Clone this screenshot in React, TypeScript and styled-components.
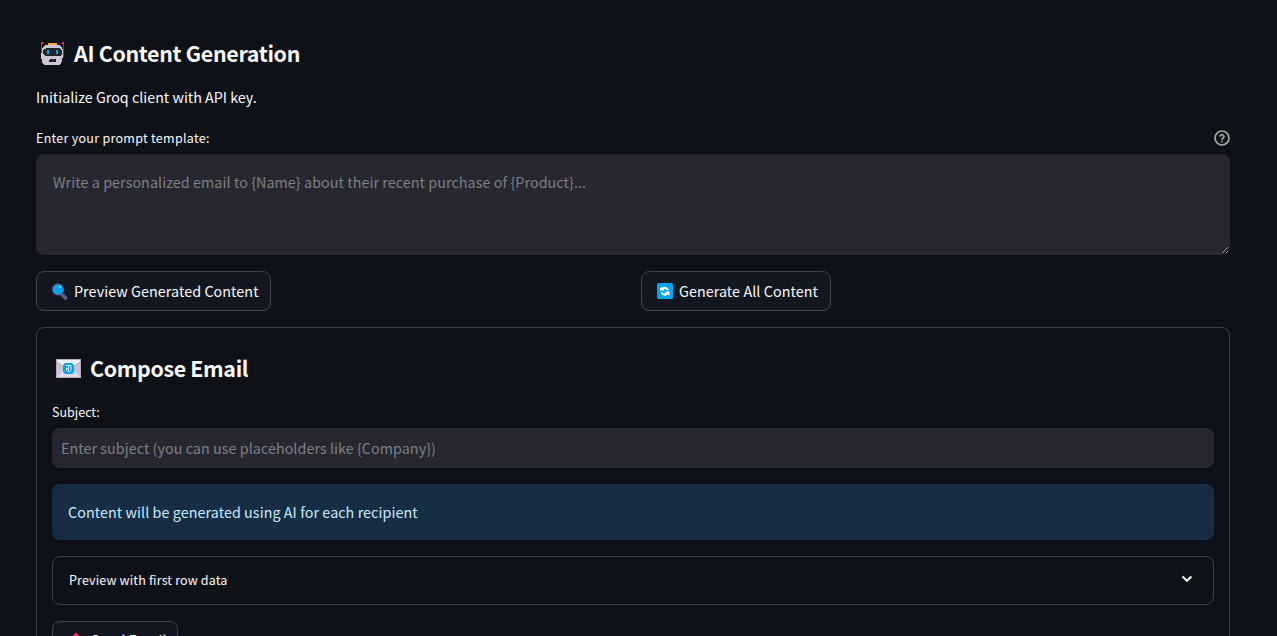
import React from 'react';
import styled, { createGlobalStyle } from 'styled-components';

const GlobalStyle = createGlobalStyle`
  *, *::before, *::after { box-sizing: border-box; }
  html, body { margin: 0; background: #0e1117; }
  body, button, input, textarea {
    font-family: "Noto Sans CJK SC", "Noto Sans", sans-serif;
  }
  body { color: #fafafa; height: 636px; overflow: hidden; }
`;

const Page = styled.main`
  height: 636px;
  overflow: hidden;
  padding: 33px 47px 0 36px;
`;

const Heading = styled.h3<{ $spacing: number }>`
  display: flex;
  align-items: center;
  gap: 9px;
  height: 40px;
  margin: 0;
  padding-left: 4px;
  font-size: 21.4px;
  font-weight: 700;
  line-height: 40px;
  letter-spacing: ${(p) => p.$spacing}px;
  white-space: nowrap;
  svg { flex: none; }
`;

const Paragraph = styled.p`
  margin: 12px 0 0;
  font-size: 14.3px;
  line-height: 24px;
`;

const LabelRow = styled.div<{ $top: number }>`
  display: flex;
  align-items: center;
  justify-content: space-between;
  height: 24px;
  margin-top: ${(p) => p.$top}px;
`;

const Label = styled.label<{ $spacing?: number }>`
  font-size: 12.5px;
  line-height: 24px;
  letter-spacing: ${(p) => p.$spacing ?? 0}px;
`;

const PromptArea = styled.textarea`
  display: block;
  width: 100%;
  height: 101px;
  margin-top: 4px;
  padding: 15px 16px;
  border: 1px solid #262730;
  border-radius: 8px;
  outline: 0;
  resize: vertical;
  background: #262730;
  color: #fafafa;
  font-size: 14.3px;
  line-height: 24px;
  letter-spacing: 0.07px;
  &::placeholder { color: #7f7f85; opacity: 1; }
`;

const SubjectInput = styled.input`
  display: block;
  width: 100%;
  height: 40px;
  margin-top: 4px;
  padding: 0 9px 2px;
  border: 0;
  border-radius: 8px;
  outline: 0;
  background: #262730;
  color: #fafafa;
  font-size: 14.3px;
  letter-spacing: 0.06px;
  &::placeholder { color: #7f7f85; opacity: 1; }
`;

const Columns = styled.div`
  display: grid;
  grid-template-columns: 1fr 1fr;
  gap: 16px;
  margin-top: 16px;
`;

const ActionButton = styled.button<{ $width: number; $raised?: boolean }>`
  display: flex;
  align-items: center;
  gap: 6px;
  width: ${(p) => p.$width}px;
  height: 40px;
  padding: 0 0 ${(p) => (p.$raised ? 2 : 0)}px 14px;
  border: 1px solid #41444c;
  border-radius: 8px;
  background: #131720;
  color: #fafafa;
  font-size: 14.3px;
  letter-spacing: 0.075px;
  line-height: ${(p) => (p.$raised ? 36 : 38)}px;
  white-space: nowrap;
  svg { flex: none; }
`;

const Panel = styled.section`
  height: 400px;
  margin-top: 16px;
  padding: 20px 15px 0;
  border: 1px solid #3e4046;
  border-radius: 8px;
`;

const Notice = styled.div`
  height: 56px;
  margin-top: 16px;
  padding: 0 16px;
  border-radius: 8px;
  background: #172d43;
  color: #c7ebff;
  font-size: 14.3px;
  letter-spacing: 0.075px;
  line-height: 56px;
`;

const Expander = styled.div`
  display: flex;
  align-items: center;
  justify-content: space-between;
  height: 49px;
  margin: 16px 0;
  padding: 0 20px 2px 16px;
  border: 1px solid #3e4046;
  border-radius: 8px;
  font-size: 12.5px;
  letter-spacing: 0.15px;
`;

const RobotIcon = () => (
  <svg width="25" height="26" viewBox="0 0 25 26" shapeRendering="crispEdges">
    <path d="M1 3h1v14H1zM23 3h1v14h-1z" fill="#b5262d" />
    <path d="M1 2h2v2H1zM22 2h2v2h-2z" fill="#ff3034" />
    <path d="M6 5h13l3 2 1 3v6l-1 5-1 3-2 1H5l-2-1-1-3-1-5 1-6 1-3z" fill="#cdc4d6" />
    <path d="M8 3h9v2H8z" fill="#ffad2e" />
    <path d="M4 9l3-1h11l3 1 1 2v3l-2 2H5l-2-2v-3z" fill="#242425" />
    <path d="M7 10h2v4H7zM16 10h2v4h-2z" fill="#00a6ed" />
    <path d="M10 19h5l1 1v2H9v-2z" fill="#242425" />
  </svg>
);

const MagnifierIcon = () => (
  <svg width="17" height="17" viewBox="0 0 17 17">
    <path d="M11 10l5 4v1.5l-1 1h-1L9.5 12z" fill="#635994" stroke="#635994" />
    <circle cx="7" cy="6.5" r="6" fill="#635994" />
    <circle cx="7" cy="6.5" r="5.1" fill="#00a6ed" />
    <path d="M8.5 3h1v2h-1z" fill="#e8f7ff" />
  </svg>
);

const RefreshIcon = () => (
  <svg width="17" height="17" viewBox="0 0 17 17">
    <rect x="1" y="0" width="16" height="16" rx="1.5" fill="#00a6ed" />
    <path d="M4 7.5V4l1.3 1A4.8 4.8 0 0 1 13 7.2h-2A3 3 0 0 0 7.4 6.4L8.6 7.5zM13.5 8.6v4l-1.3-1A4.8 4.8 0 0 1 4.5 9.2h2A3 3 0 0 0 10 10L8.8 8.6z" fill="#fff" />
  </svg>
);

const EnvelopeIcon = () => (
  <svg width="25" height="26" viewBox="0 0 25 26">
    <path d="M0 4h25v19H0z" fill="#b9aabf" />
    <path d="M1 5h23v17H1z" fill="#ccc1d5" />
    <path d="M1 22l9-9h5l9 9z" fill="#e1d8ec" />
    <path d="M1 5h23v2l-8 7H9L1 7z" fill="#f5edf9" />
    <path d="M1 7l8 6M24 7l-8 6" stroke="#a69aaf" strokeWidth="1" fill="none" />
    <rect x="7" y="8" width="11" height="11" rx="3.5" fill="#00a6ed" />
    <path d="M9.5 10.5h3v3h-2v2.5M12.5 10.5h2.5v5M12.5 13v3.5h1.5" stroke="#d8f3ff" fill="none" />
  </svg>
);

const HelpIcon = () => (
  <svg width="16" height="16" viewBox="0 0 24 24" fill="none" stroke="#a3a4a8" strokeWidth="2.6" strokeLinecap="round" strokeLinejoin="round">
    <circle cx="12" cy="12" r="10.5" />
    <path d="M9.1 9a3 3 0 0 1 5.8 1c0 2-2.9 2.5-2.9 4M12 17.5h.01" />
  </svg>
);

const ChevronIcon = () => (
  <svg width="12" height="10" viewBox="0 0 12 10" fill="none" stroke="#fafafa" strokeWidth="2">
    <path d="M1.5 1.5L6 5.8l4.5-4.3" />
  </svg>
);

const OutboxIcon = () => (
  <svg width="18" height="17" viewBox="0 0 18 17">
    <path d="M1 10l2-3h12l2 3v6H1z" fill="#b4acbc" />
    <path d="M9 0.5l5.5 5.5H11v5H7V6H3.5z" fill="#f92f60" />
  </svg>
);

export default function App() {
  return (
    <>
      <GlobalStyle />
      <Page>
        <Heading $spacing={-0.32}><RobotIcon />AI Content Generation</Heading>
        <Paragraph>Initialize Groq client with API key.</Paragraph>
        <LabelRow $top={17}>
          <Label htmlFor="prompt" $spacing={0.28}>Enter your prompt template:</Label>
          <HelpIcon />
        </LabelRow>
        <PromptArea id="prompt" placeholder="Write a personalized email to {Name} about their recent purchase of {Product}..." />
        <Columns>
          <ActionButton $width={235}><MagnifierIcon />Preview Generated Content</ActionButton>
          <ActionButton $width={190}><RefreshIcon />Generate All Content</ActionButton>
        </Columns>
        <Panel>
          <Heading $spacing={-0.34}><EnvelopeIcon />Compose Email</Heading>
          <LabelRow $top={12}>
            <Label htmlFor="subject">Subject:</Label>
          </LabelRow>
          <SubjectInput id="subject" placeholder="Enter subject (you can use placeholders like {Company})" />
          <Notice>Content will be generated using AI for each recipient</Notice>
          <Expander>Preview with first row data<ChevronIcon /></Expander>
          <ActionButton $width={126} $raised><OutboxIcon />Send Email</ActionButton>
        </Panel>
      </Page>
    </>
  );
}
